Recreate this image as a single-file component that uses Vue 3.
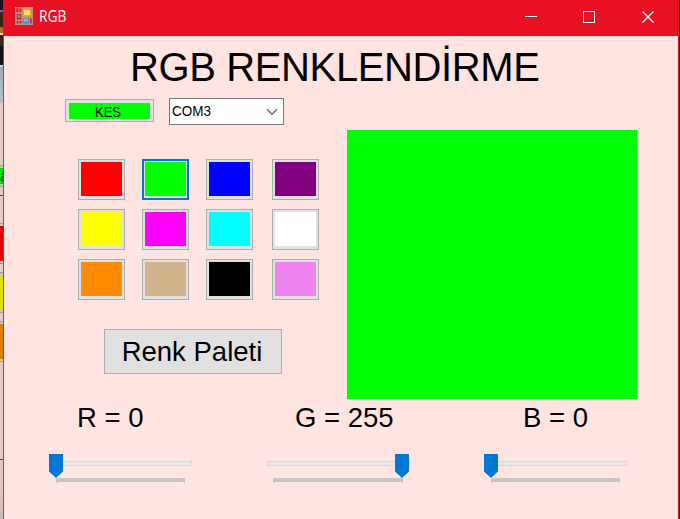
<script setup>
import { ref } from 'vue'

const swatches = [
  '#ff0000', '#00ff00', '#0000ff', '#800080',
  '#ffff00', '#ff00ff', '#00ffff', '#ffffff',
  '#ff8c00', '#d2b48c', '#000000', '#ee82ee',
]
const selected = ref(1)
const channels = ref([
  { name: 'R', value: 0 },
  { name: 'G', value: 255 },
  { name: 'B', value: 0 },
])
</script>

<template>
  <div class="desktop">
    <div class="behind"><span class="peek">a</span></div>
    <div class="window">
      <header class="titlebar">
        <svg class="app-icon" width="18" height="18" viewBox="0 0 18 18">
          <rect width="18" height="18" fill="#bd8f88" />
          <rect x="1.2" y="1.2" width="5.3" height="4" fill="#d92532" />
          <rect x="3.6" y="1" width=".8" height="4.5" fill="#bd8f88" />
          <rect x="1.8" y="7" width="4.4" height="5.5" fill="#a82a22" />
          <rect x="2.8" y="8" width="2.4" height="3" fill="#dd7a62" />
          <rect x="1.5" y="14" width="2" height="2.5" fill="#d92532" />
          <rect x="4.5" y="14" width="2" height="2.5" fill="#d92532" />
          <rect x="7.8" y="1.5" width="8.7" height="8.2" fill="#dfa61e" />
          <rect x="9" y="3" width="6" height="5" fill="#f9dc58" />
          <rect x="7.8" y="11.5" width="6.2" height="5" fill="#4a88de" />
          <rect x="8.8" y="12" width="4" height="2.4" fill="#86bbf7" />
          <rect x="15" y="11.5" width="1.7" height="5" fill="#d92532" />
        </svg>
        <span class="caption">RGB</span>
        <svg class="controls" width="130" height="14" viewBox="0 0 130 14">
          <path d="M0 6.5H12" stroke="#fff" fill="none" />
          <rect x="58.5" y="1.5" width="11" height="11" stroke="#fff" fill="none" />
          <path d="M117.5 1.5L128.5 12.5M128.5 1.5L117.5 12.5" stroke="#fff" stroke-width="1.2" fill="none" />
        </svg>
      </header>
      <main class="client">
        <h1>RGB RENKLENDİRME</h1>
        <div class="body">
          <div class="left">
            <div class="connection">
              <button class="cut"><span class="fill"><span class="text">KES</span></span></button>
              <div class="combo">
                <span>COM3</span>
                <svg width="12" height="8" viewBox="0 0 12 8"><path d="M1 1.2L6 6.2L11 1.2" fill="none" stroke="#707070" stroke-width="1.5" /></svg>
              </div>
            </div>
            <div class="swatches">
              <button
                v-for="(color, i) in swatches"
                :key="color"
                class="swatch"
                :class="{ selected: i === selected }"
                @click="selected = i"
              ><span :style="{ background: color }"></span></button>
            </div>
            <button class="palette">Renk Paleti</button>
          </div>
          <div class="preview" :style="{ background: swatches[selected] }"></div>
        </div>
        <div class="channels">
          <div v-for="c in channels" :key="c.name" class="channel">
            <div class="label" :class="c.name">{{ c.name }} = {{ c.value }}</div>
            <div class="slider">
              <div class="track"></div>
              <div class="ticks"></div>
              <svg class="thumb" :style="{ left: (c.value / 255) * 128.5 + 'px' }" width="14" height="24" viewBox="0 0 14 24">
                <path d="M0 0H14V17.5L7 24L0 17.5Z" fill="#0078d7" />
              </svg>
            </div>
          </div>
        </div>
      </main>
    </div>
    <div class="edge"></div>
  </div>
</template>

<style>
body { margin: 0; overflow: hidden; }
</style>

<style scoped>
* { box-sizing: border-box; }
button { padding: 0; margin: 0; border-radius: 0; color: #000; font-family: inherit; }
.desktop {
  display: flex;
  width: 680px;
  height: 519px;
  overflow: hidden;
  font-family: "Liberation Sans", Arial, sans-serif;
  color: #000;
}
.behind {
  width: 3px;
  flex: none;
  overflow: hidden;
  padding-top: 168px;
  background: linear-gradient(
    #171419 0 10px, #8a60b0 10px 12px, #3a2510 12px 27px, #b5651d 27px 33px,
    #e8e0e0 33px 35px, #3a2a14 35px 46px, #141216 46px 65px,
    #d8d0d4 65px 67px, #9aabba 67px, #b6c2cc 103px,
    #e3cbc7 103px 165px, #9c9c9c 165px 166px, #c8c8c8 166px 168px,
    #00e000 168px 184px, #c8c8c8 184px 186px, #9c9c9c 186px 187px,
    #e3cbc7 187px 195px, #8c2020 195px 196px, #e3cbc7 196px 223px,
    #9c9c9c 223px 224px, #c8c8c8 224px 226px, #e30000 226px 261px,
    #c8c8c8 261px 263px, #9c9c9c 263px 264px, #e3cbc7 264px 272px,
    #9c9c9c 272px 273px, #c8c8c8 273px 275px, #e3e300 275px 310px,
    #c8c8c8 310px 312px, #9c9c9c 312px 313px, #e3cbc7 313px 321px,
    #9c9c9c 321px 322px, #c8c8c8 322px 324px, #e37c00 324px 359px,
    #c8c8c8 359px 361px, #9c9c9c 361px 362px, #e3cbc7 362px 459px,
    #8c2020 459px 460px, #dfcabf 460px 490px, #c9b8b4 519px
  );
}
.peek { display: block; font-size: 14px; line-height: 16px; color: #003000; }
.window {
  width: 676px;
  flex: none;
  height: 519px;
  border: solid #d32c3e;
  border-width: 0 1px;
  border-right-color: #e81123;
  background: #ffe4e1;
}
.edge { width: 1px; background: #1c0c10; }
.titlebar {
  height: 36px;
  margin: 0 -1px;
  padding-left: 12px;
  display: flex;
  align-items: center;
  background: #e81123;
}
.app-icon { margin-top: -4px; }
.caption {
  margin: -4px 0 0 5.5px;
  font: 15.5px "Open Sans", "Noto Sans", sans-serif;
  color: #fff;
  transform: scaleX(.89);
  transform-origin: left;
}
.controls { margin: -3px 24px 0 auto; }
.client { display: flex; flex-direction: column; }
h1 {
  margin: 8px 0 0 126px;
  height: 46px;
  font-size: 40px;
  letter-spacing: -.38px;
  line-height: 47px;
  font-weight: 400;
  white-space: nowrap;
}
.body { display: flex; height: 309px; }
.left { width: 343px; padding: 8px 0 0 61px; }
.connection { display: flex; gap: 15px; }
.cut {
  width: 89px;
  height: 23px;
  margin-top: 1px;
  padding: 2px;
  border: 1px solid #adadad;
  background: #e1e1e1;
}
.cut .fill {
  display: block;
  height: 16px;
  margin: 1px 1px 0;
  background: #00ff00;
  text-align: center;
  padding-right: 3px;
}
.cut .text {
  display: block;
  font-size: 15px;
  line-height: 18px;
  transform: scaleX(.87);
}
.combo {
  width: 115px;
  height: 27px;
  display: flex;
  justify-content: space-between;
  align-items: center;
  padding: 0 5px 0 2px;
  border: 1px solid #7a7a7a;
  background: #fff;
}
.combo span {
  font-size: 15.5px;
  line-height: 22px;
  margin-top: -2px;
  transform: scaleX(.87);
  transform-origin: left;
}
.swatches {
  display: grid;
  grid-template-columns: 64px 64px 66px 47px;
  row-gap: 9px;
  margin: 34px 0 0 13px;
}
.swatch {
  width: 47px;
  height: 41px;
  padding: 2px 2px 3px;
  border: 1px solid #adadad;
  background: #e1e1e1;
}
.swatch span { display: block; height: 34px; }
.swatch.selected { border: 2px solid #0078d7; padding: 1px 1px 2px; }
.palette {
  display: block;
  width: 178px;
  height: 45px;
  margin: 29px 0 0 39px;
  border: 1px solid #adadad;
  background: #e1e1e1;
  font-size: 27.5px;
  line-height: 43px;
  padding-right: 2px;
}
.preview { width: 290px; height: 269px; margin-top: 40px; }
.channels { display: flex; gap: 74.5px; padding-left: 45px; }
.channel { width: 143px; }
.label {
  height: 36px;
  margin-top: 2px;
  font-size: 27.5px;
  line-height: 34px;
  white-space: nowrap;
}
.R { padding-left: 28px; }
.G { padding-left: 28.5px; }
.B { padding-left: 39px; }
.slider { position: relative; height: 32px; margin-top: 17px; padding-top: 7px; }
.track { height: 5px; border: 1px solid #d6d6d6; background: #e7eaea; }
.ticks {
  height: 5px;
  margin: 12px 7px 0 6.5px;
  border: solid #c4c4c4;
  border-width: 4px 1px 0;
}
.thumb { position: absolute; top: -.5px; left: 0; }
</style>
